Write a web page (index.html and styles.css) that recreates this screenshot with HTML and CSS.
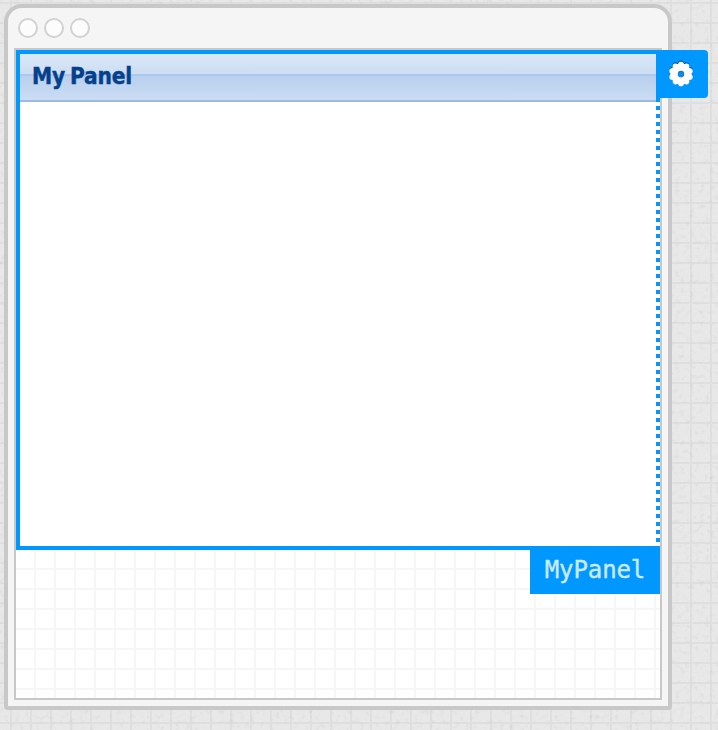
FILE: index.html
```
<!DOCTYPE html>
<html lang="en">
<head>
<meta charset="utf-8">
<title>MyPanel</title>
<link rel="stylesheet" href="styles.css">
</head>
<body>
<svg class="grain" width="718" height="730" aria-hidden="true">
  <filter id="grain" x="0" y="0" width="100%" height="100%">
    <feTurbulence type="fractalNoise" baseFrequency="0.2" numOctaves="3" seed="4"/>
    <feColorMatrix values="0 0 0 0 0.55  0 0 0 0 0.55  0 0 0 0 0.55  1.6 0 0 0 -0.86"/>
  </filter>
  <rect width="718" height="730" filter="url(#grain)"/>
</svg>
<main class="window">
  <header class="window-bar">
    <span class="dot"></span><span class="dot"></span><span class="dot"></span>
  </header>
  <div class="canvas">
    <section class="panel">
      <h1 class="panel-title"><span>My Panel</span></h1>
      <div class="resize-edge"></div>
      <button class="settings" aria-label="Settings">
        <svg width="26" height="28" viewBox="-13 -14 26 28">
          <defs>
            <g id="gear">
              <circle r="10.6"/>
              <circle cx="0" cy="-9.4" r="2.8"/>
              <circle cx="5.5" cy="-7.6" r="2.8"/>
              <circle cx="8.9" cy="-2.9" r="2.8"/>
              <circle cx="8.9" cy="2.9" r="2.8"/>
              <circle cx="5.5" cy="7.6" r="2.8"/>
              <circle cx="0" cy="9.4" r="2.8"/>
              <circle cx="-5.5" cy="7.6" r="2.8"/>
              <circle cx="-8.9" cy="2.9" r="2.8"/>
              <circle cx="-8.9" cy="-2.9" r="2.8"/>
              <circle cx="-5.5" cy="-7.6" r="2.8"/>
            </g>
          </defs>
          <use href="#gear" y="-1.3" fill="#075c9c"/>
          <use href="#gear" fill="#fff"/>
          <circle r="3.2" fill="#0a78c4"/>
          <circle cy=".5" r="2.7" fill="#0a8ce8"/>
        </svg>
      </button>
      <div class="tag">MyPanel</div>
    </section>
  </div>
</main>
</body>
</html>
```
FILE: styles.css
```
* { box-sizing: border-box; }

body {
  margin: 0;
  padding: 4px;
  height: 730px;
  overflow: hidden;
  background-color: #e8e8e8;
  background-image:
    linear-gradient(to right, #dfdfdf 2px, transparent 2px),
    linear-gradient(to bottom, #dfdfdf 2px, transparent 2px);
  background-size: 20px 20px;
  background-position: 10px 2px;
}

.grain { position: absolute; top: 0; left: 0; opacity: .5; }

.window {
  position: relative;
  width: 668px;
  height: 706px;
  padding: 0 6px 6px;
  border: 4px solid #c8c8c8;
  border-radius: 18px 18px 4px 4px;
  background: #f5f5f5;
}

.window-bar {
  display: flex;
  gap: 6px;
  height: 40px;
  padding: 10px 0 0 4px;
}

.dot {
  width: 20px;
  height: 20px;
  border: 2px solid #d2d2d2;
  border-radius: 50%;
  background: #fcfcfc;
}

.canvas {
  width: 648px;
  height: 652px;
  border: 2px solid #c8c8c8;
  background-color: #fff;
  background-image:
    linear-gradient(to right, transparent 18px, #f6f6f6 18px),
    linear-gradient(to bottom, transparent 18px, #f6f6f6 18px);
  background-size: 20px 20px;
}

.panel {
  position: relative;
  width: 644px;
  height: 500px;
  border: 4px solid #0097ff;
  border-right: 0;
  background: #fff;
}

.panel-title {
  height: 48px;
  margin: 0 4px 0 0;
  padding-left: 12px;
  border-bottom: 2px solid #99bbe8;
  background: linear-gradient(#dae7f6, #cddef3 20px, #abc7ec 20px, #abc7ec 22px, #b8cfee 22px, #cbddf3 46px);
  color: #04408c;
  font: bold 22.5px/44px "DejaVu Sans Condensed", "DejaVu Sans", sans-serif;
  font-stretch: condensed;
  letter-spacing: -.15px;
  word-spacing: -2px;
  -webkit-text-stroke: .4px #04408c;
}

.resize-edge {
  position: absolute;
  top: 44px;
  right: 0;
  width: 4px;
  height: 448px;
  background: repeating-linear-gradient(#0097ff 0 4px, #fff 4px 8px);
}

.settings {
  position: absolute;
  top: -4px;
  left: 636px;
  display: flex;
  width: 52px;
  height: 48px;
  padding: 10px 0 0 12px;
  border: 0;
  border-radius: 0 4px 4px 0;
  background: #0097ff;
  align-items: flex-start;
}

.settings svg { display: block; }

.tag {
  position: absolute;
  top: 492px;
  right: 0;
  width: 130px;
  height: 48px;
  background: #0097ff;
  color: #cceaff;
  font: 24px/48px "DejaVu Sans Mono", monospace;
  letter-spacing: -.1px;
  -webkit-text-stroke: .4px #cceaff;
  text-align: center;
}
```
